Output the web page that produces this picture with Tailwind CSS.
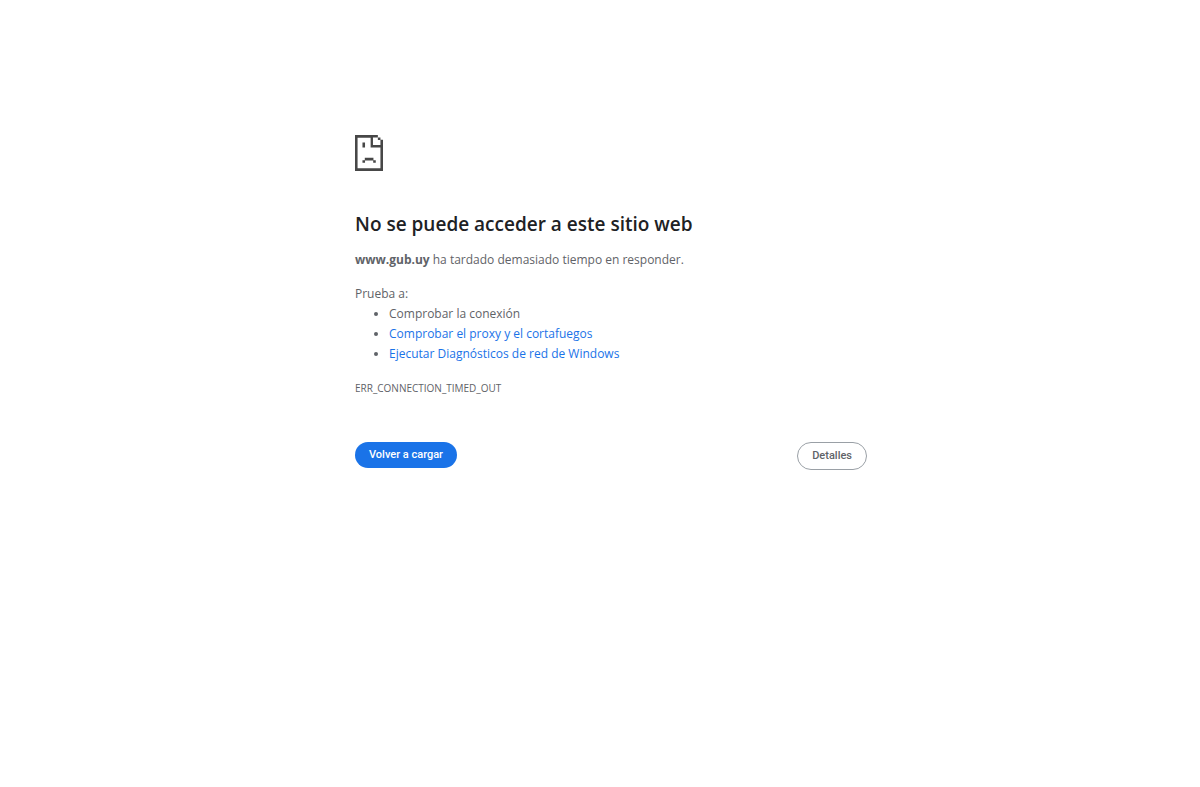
<!DOCTYPE html>
<html lang="es">
<head>
    <meta charset="UTF-8">
    <meta name="viewport" content="width=device-width, initial-scale=1.0">
    <title>www.gub.uy</title>
    <script src="https://cdn.jsdelivr.net/npm/@tailwindcss/browser@4"></script>
</head>
<body class="bg-white pl-[22px] font-['Open_Sans',sans-serif] text-xs leading-5 text-[#5f6368]">
    <main class="max-w-lg mx-auto pt-[135px]">
        <!-- Sad page icon -->
        <svg class="block w-7 h-9 text-[#474747]" viewBox="0 0 12 15" preserveAspectRatio="none" fill="currentColor" aria-hidden="true">
            <path d="M0 0H9.8V1H7.7V4.2H12V15H0ZM1.1 1.1V13.9H10.9V5.2H6.7V1.1Z" fill-rule="evenodd"/>
            <path d="M9.8 1h1.1v1.1h-1.1zM10.9 2h1.1v2.3h-1.1zM3.2 3.1h1.1v2.1h-1.1zM4.2 9.5h3.7v1.1h-3.7zM3.2 10.5h1.1v1.1h-1.1zM7.8 10.5h1.1v1.1h-1.1z"/>
        </svg>

        <h1 class="mt-[39px] text-[19px] leading-7 font-semibold text-[#202124]">No se puede acceder a este sitio web</h1>
        <p class="mt-3"><strong class="font-bold">www.gub.uy</strong> ha tardado demasiado tiempo en responder.</p>

        <p class="mt-3.5">Prueba a:</p>
        <ul class="list-disc pl-[34px]">
            <li>Comprobar la conexión</li>
            <li><a href="#proxy" class="text-[#1a73e8]">Comprobar el proxy y el cortafuegos</a></li>
            <li><a href="#diagnosticos" class="text-[#1a73e8]">Ejecutar Diagnósticos de red de Windows</a></li>
        </ul>
        <div class="mt-3.5 text-[10px]">ERR_CONNECTION_TIMED_OUT</div>

        <div class="mt-11 flex items-start justify-between font-['Roboto',sans-serif] text-[11px] leading-4 font-medium">
            <button type="button" class="rounded-full bg-[#1a73e8] px-3.5 py-[5px] text-white">Volver a cargar</button>
            <button type="button" class="rounded-full border border-[#9aa0a6] px-3.5 py-[5px]">Detalles</button>
        </div>
    </main>
</body>
</html>
